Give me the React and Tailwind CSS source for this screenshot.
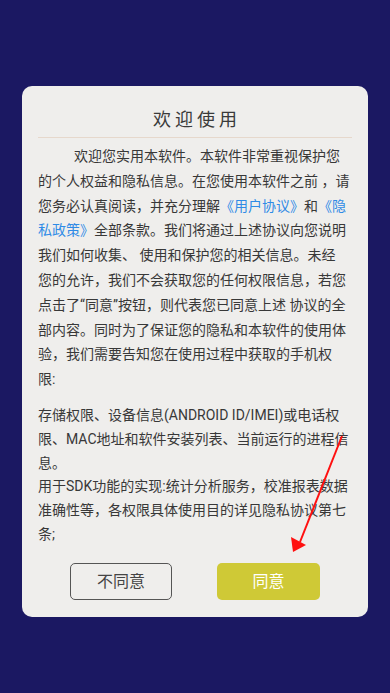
import React from 'react';

const FONT = { fontFamily: 'Roboto, "Noto Sans CJK SC", sans-serif' };

function Link({ children }) {
  return <span className="text-[#2f8be6]">{children}</span>;
}

export default function App() {
  return (
    <div className="relative w-[390px] h-[693px] bg-[#1b1862] pt-[86px] overflow-hidden" style={FONT}>
      <div className="mx-[22px] h-[531px] rounded-[10px] bg-[#efeeec] px-4 pt-[22px] flex flex-col">
        <h1 className="pl-[4px] text-center text-[18px] leading-6 tracking-[4px] text-[#3a3a3a]">欢迎使用</h1>
        <div className="mt-[5px] h-px bg-[#e6d8cc]" />

        <div className="mt-[6px] text-[14px] text-[#383838] whitespace-nowrap">
          <p className="leading-[24.8px]">
            <span className="pl-[36px]">欢迎您实用本软件。本软件非常重视保护您</span><br />
            的个人权益和隐私信息。在您使用本软件之前 ，请<br />
            您务必认真阅读，并充分理解<Link>《用户协议》</Link>和<Link>《隐</Link><br />
            <Link>私政策》</Link>全部条款。我们将通过上述协议向您说明<br />
            我们如何收集、 使用和保护您的相关信息。未经<br />
            您的允许，我们不会获取您的任何权限信息，若您<br />
            点击了“同意”按钮，则代表您已同意上述 协议的全<br />
            部内容。同时为了保证您的隐私和本软件的使用体<br />
            验，我们需要告知您在使用过程中获取的手机权<br />
            限:
          </p>
          <p className="mt-[12px] leading-[23.8px]">
            存储权限、设备信息(ANDROID ID/IMEI)或电话权<br />
            限、MAC地址和软件安装列表、当前运行的进程信<br />
            息。<br />
            用于SDK功能的实现:统计分析服务，校准报表数据<br />
            准确性等，各权限具体使用目的详见隐私协议第七<br />
            条;
          </p>
        </div>

        <div className="mt-auto mb-[17px] flex justify-center gap-[45px]">
          <button className="w-[102px] h-[37px] rounded-[5px] border border-[#555] text-[16px] text-[#444]">
            不同意
          </button>
          <button className="w-[103px] h-[37px] rounded-[5px] bg-[#cfc936] text-[16px] text-white">
            同意
          </button>
        </div>
      </div>

      <svg className="absolute left-0 top-0 pointer-events-none" width="390" height="693" viewBox="0 0 390 693">
        <line x1="342" y1="436" x2="300" y2="542" stroke="#ff1010" strokeWidth="2" />
        <polygon points="293,552 291,537 306,545" fill="#ff1010" />
      </svg>
    </div>
  );
}
